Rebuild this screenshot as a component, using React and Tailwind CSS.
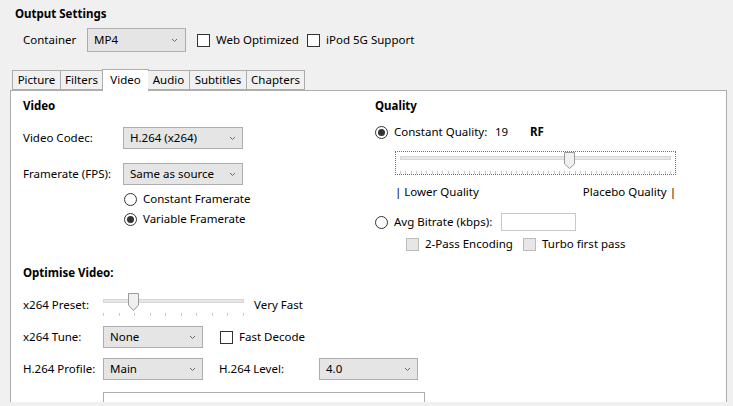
import React from 'react';

const Chevron = () => (
  <svg width="7" height="5" viewBox="0 0 7 5" className="shrink-0">
    <path d="M1 1 L3.5 3.5 L6 1" fill="none" stroke="#6b6b6b" strokeWidth="1" />
  </svg>
);

const Select = ({ value, w }) => (
  <div
    className={`${w} h-[22px] flex items-center justify-between pl-[6px] pr-[6px] border border-[#adadad] bg-[#e5e5e5] shrink-0`}
  >
    <span>{value}</span>
    <Chevron />
  </div>
);

const Checkbox = ({ disabled }) => (
  <span
    className={
      disabled
        ? 'w-[13px] h-[13px] border border-[#bcbcbc] bg-[#e6e6e6] shrink-0'
        : 'w-[13px] h-[13px] border border-[#333333] bg-white shrink-0'
    }
  />
);

const Radio = ({ checked }) => (
  <span className="w-[13px] h-[13px] rounded-full border border-[#333333] bg-white flex items-center justify-center shrink-0">
    {checked && <span className="w-[7px] h-[7px] rounded-full bg-[#333333]" />}
  </span>
);

const QualitySlider = () => {
  const ticks = [];
  for (let i = 0; i <= 51; i++) {
    const x = Math.round(4 + (i * 270) / 51) + 0.5;
    ticks.push(<line key={i} x1={x} y1="19" x2={x} y2="22" stroke="#c8c8c8" />);
  }
  return (
    <div className="w-[281px] h-[24px] border border-dotted border-[#707070] ml-[20px] mt-[9px]">
      <svg width="279" height="22" viewBox="0 0 279 22">
        <rect x="4.5" y="4.5" width="270" height="3" fill="#e7e7e7" stroke="#d6d6d6" />
        {ticks}
        <path d="M168.5 0.5 H178.5 V12 L173.5 16.5 L168.5 12 Z" fill="#f0f0f0" stroke="#9b9b9b" />
      </svg>
    </div>
  );
};

const PresetSlider = () => {
  const ticks = [];
  for (let i = 0; i <= 9; i++) {
    const x = Math.round((i * 140) / 9) + 0.5;
    ticks.push(<line key={i} x1={x} y1="20" x2={x} y2="23" stroke="#c8c8c8" />);
  }
  return (
    <svg width="142" height="24" viewBox="0 0 142 24" className="shrink-0">
      <rect x="0.5" y="6.5" width="140" height="3" fill="#e7e7e7" stroke="#d6d6d6" />
      {ticks}
      <path d="M25.5 0.5 H35.5 V12 L30.5 17.5 L25.5 12 Z" fill="#f0f0f0" stroke="#9b9b9b" />
    </svg>
  );
};

const tabs = [
  { name: 'Picture', w: 'w-[49px]' },
  { name: 'Filters', w: 'w-[42px]' },
  { name: 'Video', w: 'w-[47px]', active: true },
  { name: 'Audio', w: 'w-[42px]' },
  { name: 'Subtitles', w: 'w-[57px]' },
  { name: 'Chapters', w: 'w-[58px]' },
];

export default function App() {
  return (
    <div className="w-[733px] h-[406px] bg-[#f0f0f0] overflow-hidden text-[11.5px] text-black font-['Noto_Sans',sans-serif] leading-[16px] whitespace-nowrap">
      <div className="pl-[15px] pt-[6px] font-bold h-[22px]">Output Settings</div>

      {/* Container row */}
      <div className="flex items-center h-[24px] mt-[6px] pl-[23px]">
        <span className="w-[64px]">Container</span>
        <div className="w-[99px] h-[24px] flex items-center justify-between pl-[6px] pr-[7px] border border-[#adadad] bg-[#e5e5e5]">
          <span>MP4</span>
          <Chevron />
        </div>
        <div className="flex items-center gap-[6px] ml-[11px]">
          <Checkbox />
          <span className="w-[85px]">Web Optimized</span>
        </div>
        <div className="flex items-center gap-[6px] ml-[6px]">
          <Checkbox />
          <span>iPod 5G Support</span>
        </div>
      </div>

      {/* Tabs */}
      <div className="flex items-end h-[22px] mt-[16px] ml-[12px] relative z-10">
        {tabs.map((t) =>
          t.active ? (
            <div
              key={t.name}
              className={`${t.w} h-[22px] -mx-px bg-white border border-b-0 border-[#adadad] flex items-center justify-center -mb-px pb-[2px]`}
            >
              {t.name}
            </div>
          ) : (
            <div
              key={t.name}
              className={`${t.w} h-[20px] bg-[#f0f0f0] border border-[#adadad] border-l-0 first:border-l flex items-center justify-center`}
            >
              {t.name}
            </div>
          )
        )}
      </div>

      {/* Panel */}
      <div className="ml-[10px] w-[717px] h-[312px] bg-white border border-[#adadad] border-b-0 overflow-hidden flex">
        {/* Left column */}
        <div className="w-[364px] pl-[12px] pt-[7px] shrink-0">
          <div className="font-bold h-[16px]">Video</div>

          <div className="flex items-center mt-[13px] h-[22px]">
            <span className="w-[100px] shrink-0">Video Codec:</span>
            <Select w="w-[120px]" value="H.264 (x264)" />
          </div>
          <div className="flex items-center mt-[14px] h-[22px]">
            <span className="w-[100px] shrink-0">Framerate (FPS):</span>
            <Select w="w-[120px]" value="Same as source" />
          </div>
          <div className="flex items-center gap-[6px] ml-[101px] mt-[4px] h-[20px]">
            <Radio />
            <span>Constant Framerate</span>
          </div>
          <div className="flex items-center gap-[6px] ml-[101px] h-[20px]">
            <Radio checked />
            <span>Variable Framerate</span>
          </div>

          <div className="font-bold h-[16px] mt-[36px]">Optimise Video:</div>

          <div className="flex items-center mt-[12px] h-[24px]">
            <span className="w-[80px] shrink-0">x264 Preset:</span>
            <PresetSlider />
            <span className="ml-[9px]">Very Fast</span>
          </div>
          <div className="flex items-center mt-[9px] h-[22px]">
            <span className="w-[80px] shrink-0">x264 Tune:</span>
            <Select w="w-[100px]" value="None" />
            <div className="flex items-center gap-[6px] ml-[17px]">
              <Checkbox />
              <span>Fast Decode</span>
            </div>
          </div>
          <div className="flex items-center mt-[10px] h-[22px]">
            <span className="w-[80px] shrink-0">H.264 Profile:</span>
            <Select w="w-[100px]" value="Main" />
            <span className="w-[100px] ml-[16px] shrink-0">H.264 Level:</span>
            <Select w="w-[99px]" value="4.0" />
          </div>
          <div className="flex items-start mt-[12px] h-[30px]">
            <span className="w-[80px] shrink-0 pt-[6px] text-right pr-[6px]">Extra Options:</span>
            <div className="w-[322px] h-[30px] border border-[#adadad] bg-white shrink-0" />
          </div>
        </div>

        {/* Right column */}
        <div className="pt-[7px] flex-1">
          <div className="font-bold h-[16px]">Quality</div>

          <div className="flex items-center mt-[8px] h-[20px]">
            <Radio checked />
            <span className="ml-[6px] w-[101px] shrink-0">Constant Quality:</span>
            <span className="w-[35px] shrink-0">19</span>
            <span className="font-bold">RF</span>
          </div>

          <QualitySlider />

          <div className="flex justify-between w-[281px] ml-[20px] mt-[9px] h-[16px]">
            <span>| Lower Quality</span>
            <span>Placebo Quality |</span>
          </div>

          <div className="flex items-center mt-[12px] h-[20px]">
            <Radio />
            <span className="ml-[6px] w-[107px] shrink-0">Avg Bitrate (kbps):</span>
            <div className="w-[75px] h-[18px] border border-[#c8c8c8] bg-white" />
          </div>

          <div className="flex items-center ml-[31px] mt-[4px] h-[16px]">
            <Checkbox disabled />
            <span className="ml-[6px] w-[98px] shrink-0">2-Pass Encoding</span>
            <Checkbox disabled />
            <span className="ml-[6px]">Turbo first pass</span>
          </div>
        </div>
      </div>
    </div>
  );
}
